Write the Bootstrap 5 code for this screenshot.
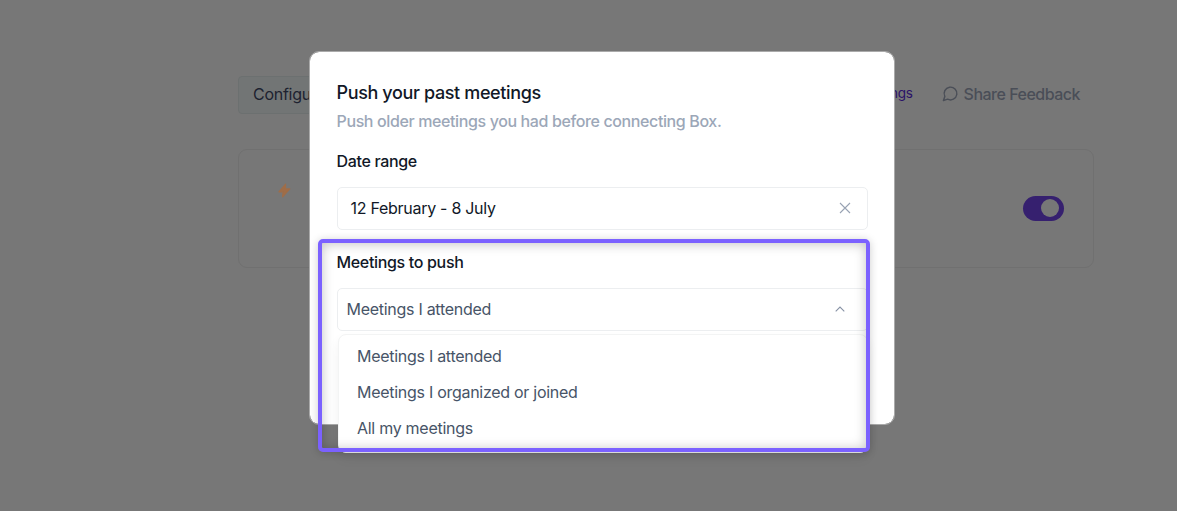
<!DOCTYPE html>
<html lang="en">
<head>
    <meta charset="UTF-8">
    <meta name="viewport" content="width=device-width, initial-scale=1.0">
    <title>Push your past meetings</title>
    <link rel="stylesheet" href="https://cdn.jsdelivr.net/npm/bootstrap@5.3.0/dist/css/bootstrap.min.css">
    <style>
        body {
            font-family: Inter, "Liberation Sans", sans-serif;
            font-size: 16px;
            letter-spacing: -0.28px;
            background-color: #777777;
            height: 511px;
            overflow: hidden;
        }
        .page-area {
            width: 856px;
            margin-left: 238px;
            padding-top: 76px;
        }
        .config-btn {
            width: 76px;
            height: 38px;
            padding: 0 0 2px 14px;
            color: #1d2230;
            background-color: #727575;
            border: 1px solid #6c7070;
            border-radius: 4px;
        }
        .top-links {
            padding-right: 14px;
            gap: 29px;
            height: 35px;
        }
        .settings-link {
            color: #2b1268;
            font-size: 13.5px;
            letter-spacing: -0.3px;
        }
        .feedback-link {
            color: #4a4e57;
            font-weight: 500;
            letter-spacing: -0.5px;
            gap: 5px;
        }
        .sync-panel {
            height: 119px;
            margin-top: 35px;
            border: 1px solid #707070;
            border-radius: 9px;
            padding: 33px 29px 0 39px;
        }
        .toggle {
            width: 41px;
            height: 25px;
            margin-top: 13px;
            padding: 3px 5px 4px;
            background-color: #36206f;
        }
        .toggle-knob {
            width: 18px;
            height: 18px;
            background-color: #777777;
        }
        .push-dialog {
            left: 309px;
            top: 51px;
            width: 586px;
            height: 374px;
            padding: 29px 26px 0 26.5px;
            background-color: #fff;
            border: 1px solid #aaa;
            border-radius: 10px;
            background-clip: padding-box;
            color: #111827;
        }
        .dialog-title {
            font-size: 18px;
            line-height: 24px;
            font-weight: 500;
            letter-spacing: -0.37px;
            margin-bottom: 4px;
        }
        .dialog-note {
            color: #9ca7b8;
            font-weight: 500;
            line-height: 24px;
            letter-spacing: -0.38px;
            margin-bottom: 16px;
        }
        .field-label {
            display: block;
            font-weight: 500;
            line-height: 24px;
            letter-spacing: -0.33px;
            margin-bottom: 14px;
        }
        .field-box {
            height: 43px;
            border: 1px solid #eceef0;
            border-radius: 5px;
            margin-bottom: 20px;
            padding-bottom: 1px;
        }
        .date-box {
            padding-left: 13px;
            padding-right: 16px;
        }
        .select-box {
            padding-left: 9px;
            padding-right: 22px;
            color: #475467;
        }
        .option-menu {
            left: 338px;
            top: 334px;
            width: 530px;
            height: 119px;
            padding: 5px 19px 0 18px;
            background-color: #fff;
            border: 1px solid #f3f4f4;
            border-radius: 8px;
            box-shadow: 0 6px 12px rgba(0, 0, 0, .06);
            color: #475467;
        }
        .option-menu li {
            height: 36px;
            line-height: 32px;
        }
        .highlight {
            left: 318px;
            top: 239px;
            width: 552px;
            height: 213px;
            border: 4px solid #7b61ff;
            border-radius: 5px;
            box-shadow: 0 1px 9px rgba(0, 0, 0, .2), inset 0 1px 12px rgba(0, 0, 0, .24);
        }
    </style>
</head>
<body>
    <main class="page-area">
        <header class="d-flex justify-content-between">
            <div class="config-btn d-flex align-items-center overflow-hidden">Configu</div>
            <div class="top-links d-flex align-items-center">
                <span class="settings-link">Settings</span>
                <span class="feedback-link d-flex align-items-center">
                    <svg width="17" height="17" viewBox="0 0 24 24" fill="none" stroke="currentColor" stroke-width="2" stroke-linecap="round" stroke-linejoin="round"><path d="M7.9 20A9 9 0 1 0 4 16.1L2 22Z"/></svg>
                    Share Feedback
                </span>
            </div>
        </header>
        <section class="sync-panel d-flex justify-content-between align-items-start">
            <svg class="flex-shrink-0" width="14" height="15" viewBox="0 0 14 15"><path d="M7.6 1.2 0.9 8.8H5.1L4.6 13.8 11.8 5.9H7.4Z" fill="#9f6d48" stroke="#9f6d48" stroke-width="1.2" stroke-linejoin="round"/></svg>
            <div class="toggle rounded-pill d-flex justify-content-end"><span class="toggle-knob rounded-circle"></span></div>
        </section>
    </main>

    <div class="push-dialog position-absolute" role="dialog">
        <h1 class="dialog-title">Push your past meetings</h1>
        <p class="dialog-note">Push older meetings you had before connecting Box.</p>
        <span class="field-label">Date range</span>
        <div class="field-box date-box d-flex align-items-center justify-content-between">
            <span>12 February - 8 July</span>
            <svg width="12" height="12" viewBox="0 0 12 12" fill="none" stroke="#98a2b3" stroke-width="1.1"><path d="M1 1 11 11M11 1 1 11"/></svg>
        </div>
        <span class="field-label">Meetings to push</span>
        <div class="field-box select-box d-flex align-items-center justify-content-between">
            <span>Meetings I attended</span>
            <svg width="10" height="6" viewBox="0 0 10 6" fill="none" stroke="#8792a5" stroke-width="1.1"><path d="M.7 5.3 5 1 9.3 5.3"/></svg>
        </div>
    </div>

    <ul class="option-menu list-unstyled position-absolute mb-0">
        <li>Meetings I attended</li>
        <li>Meetings I organized or joined</li>
        <li>All my meetings</li>
    </ul>
    <div class="highlight position-absolute"></div>

    <script src="https://cdn.jsdelivr.net/npm/bootstrap@5.3.0/dist/js/bootstrap.bundle.min.js"></script>
</body>
</html>
